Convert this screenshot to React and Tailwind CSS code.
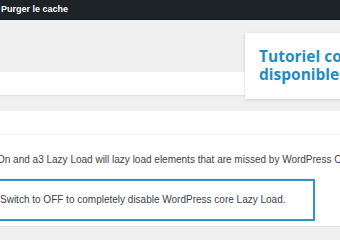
export default function App() {
  return (
    <div className="relative w-[340px] h-[240px] overflow-hidden bg-[#f0f0f1] font-['Liberation_Sans',Arial,sans-serif]">
      <div className="h-[20px] bg-[#1d2327] flex items-center pl-[1px] border-b border-[#101417]">
        <span className="text-white text-[9px] font-bold leading-none">Purger le cache</span>
      </div>
      <div className="h-[52px]" />
      <div className="h-[23px] bg-white shadow-[0_1px_1px_rgba(0,0,0,0.06)]" />
      <div className="h-[16px]" />
      <div className="bg-white">
        <div className="h-[24px] border-b border-[#f3f3f3]" />
        <div className="pt-[19px] ml-[-3px] text-[10px] leading-[12px] text-[#3c434a] whitespace-nowrap">
          On and a3 Lazy Load will lazy load elements that are missed by WordPress Core Lazy Load.
        </div>
        <div className="pt-[13px] pb-[5px]">
          <div className="ml-[-10px] w-[325px] h-[42px] border-2 border-[#2f95c6] flex items-center pl-[8px] shadow-[0_0_1px_rgba(47,149,198,0.5)]">
            <span className="text-[10px] leading-[12px] text-[#3c434a] whitespace-nowrap">
              Switch to OFF to completely disable WordPress core Lazy Load.
            </span>
          </div>
        </div>
      </div>
      <div className="border-t border-[#e6e6e6]" />
      <div className="absolute left-[245px] top-[33px] w-[120px] h-[66px] bg-white shadow-[0_1px_3px_rgba(0,0,0,0.15)] pl-[14px] pt-[14px] font-['Open_Sans',sans-serif] text-[15.5px] leading-[18px] font-bold text-[#1f8cc2] whitespace-nowrap">
        <div>Tutoriel complet</div>
        <div>disponible</div>
      </div>
    </div>
  );
}
